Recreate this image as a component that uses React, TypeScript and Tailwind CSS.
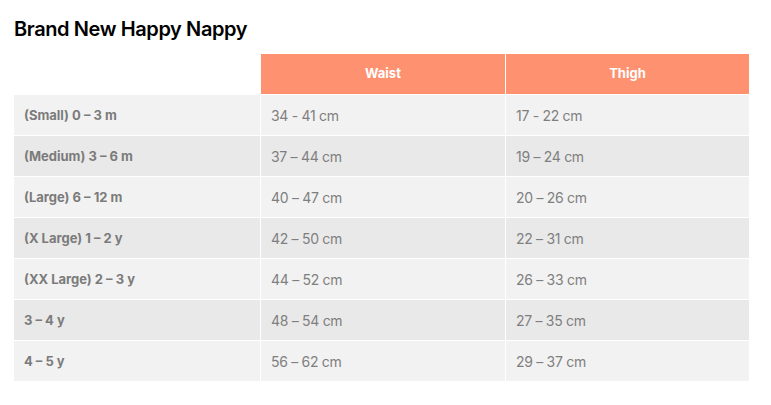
import React from "react";

const rows: [string, string, string][] = [
  ["(Small) 0 – 3 m", "34 - 41 cm", "17 - 22 cm"],
  ["(Medium) 3 – 6 m", "37 – 44 cm", "19 – 24 cm"],
  ["(Large) 6 – 12 m", "40 – 47 cm", "20 – 26 cm"],
  ["(X Large) 1 – 2 y", "42 – 50 cm", "22 – 31 cm"],
  ["(XX Large) 2 – 3 y", "44 – 52 cm", "26 – 33 cm"],
  ["3 – 4 y", "48 – 54 cm", "27 – 35 cm"],
  ["4 – 5 y", "56 – 62 cm", "29 – 37 cm"],
];

export default function App() {
  return (
    <div className="min-h-[405px] bg-white px-[14px] pt-[16px] font-['Inter',sans-serif]">
      <h2 className="text-[20px] font-semibold leading-[26px] tracking-[-0.4px] text-black">
        Brand New Happy Nappy
      </h2>
      <div className="mt-[12px] grid w-[735px] grid-cols-[246px_244px_243px] gap-px bg-white">
        <div className="h-[40px]" />
        <div className="flex h-[40px] items-center justify-center bg-[#fd9170] text-[13px] font-bold text-white">
          Waist
        </div>
        <div className="flex h-[40px] items-center justify-center bg-[#fd9170] text-[13px] font-bold text-white">
          Thigh
        </div>
        {rows.map(([size, waist, thigh], i) => {
          const bg = i % 2 === 0 ? "bg-[#f2f2f2]" : "bg-[#e9e9e9]";
          return (
            <React.Fragment key={size}>
              <div className={`flex h-[40px] items-center pl-[10px] pt-[1px] text-[13px] font-bold text-[#7b7b7b] ${bg}`}>
                {size}
              </div>
              <div className={`flex h-[40px] items-center pl-[10px] text-[14px] tracking-[-0.3px] text-[#7f7f7f] ${bg}`}>
                {waist}
              </div>
              <div className={`flex h-[40px] items-center pl-[10px] text-[14px] tracking-[-0.3px] text-[#7f7f7f] ${bg}`}>
                {thigh}
              </div>
            </React.Fragment>
          );
        })}
      </div>
    </div>
  );
}
